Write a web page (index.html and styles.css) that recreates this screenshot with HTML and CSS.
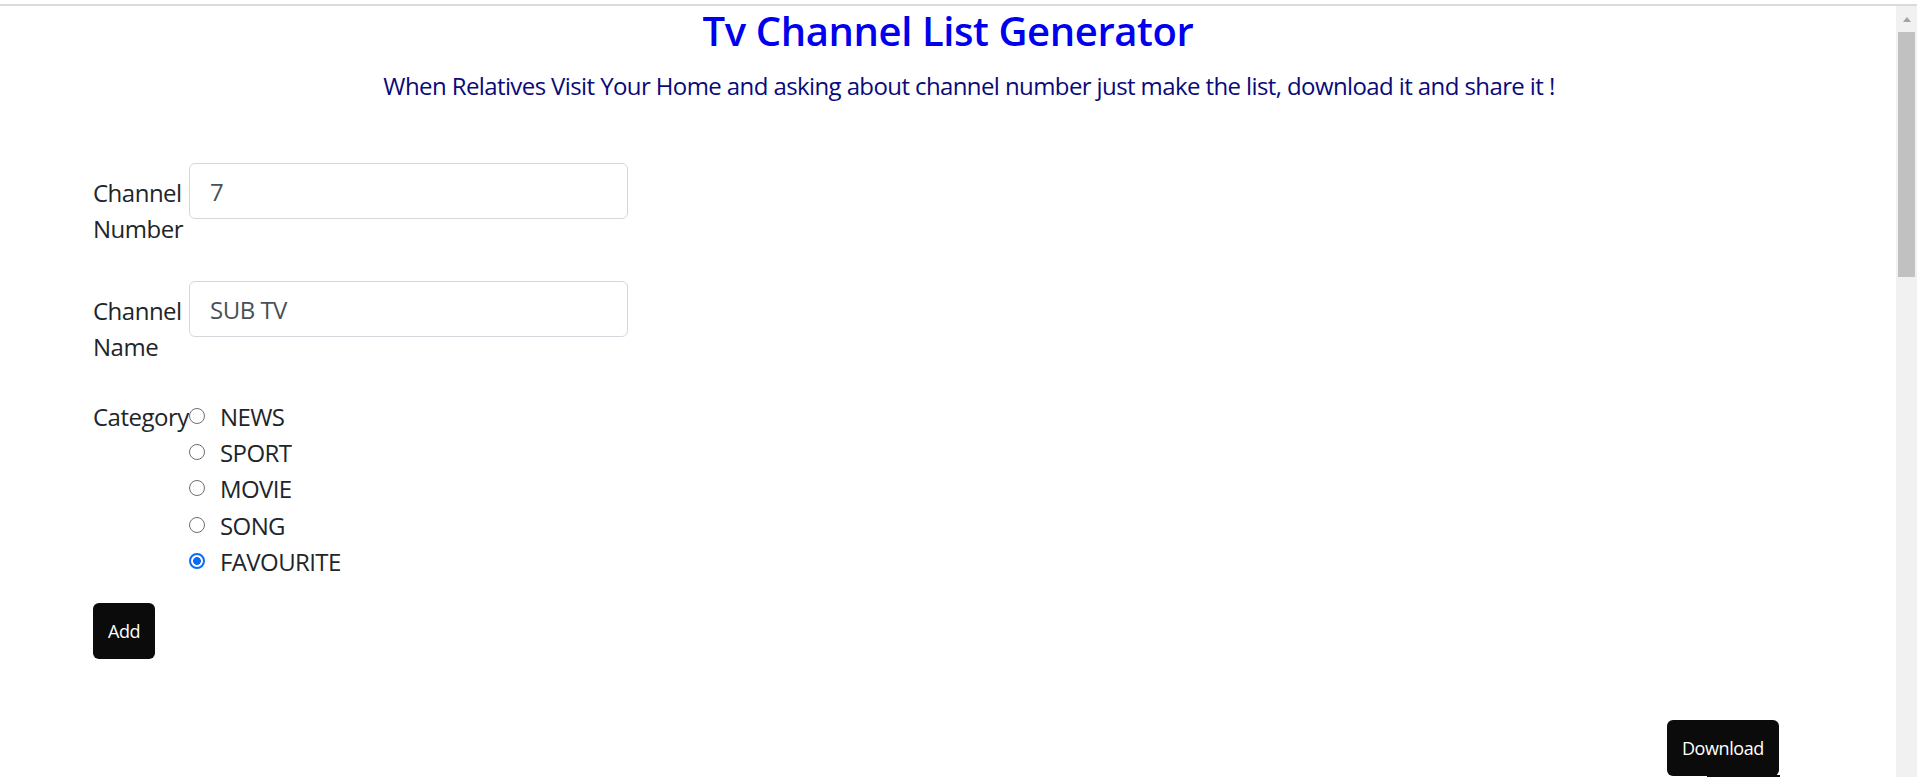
FILE: index.html
```html
<!DOCTYPE html>
<html lang="en">
<head>
<meta charset="utf-8">
<title>Tv Channel List Generator</title>
<link rel="stylesheet" href="styles.css">
</head>
<body>
<div class="topline"></div>
<div class="viewport">
  <main class="page">
    <div class="container">
      <header class="hero">
        <h1 class="title">Tv Channel List Generator</h1>
        <p class="subtitle">When Relatives Visit Your Home and asking about channel number just make the list, download it and share it !</p>
      </header>
      <form class="form">
        <div class="field">
          <label class="label" for="num">Channel Number</label>
          <input id="num" class="control" type="text" value="7">
        </div>
        <div class="field">
          <label class="label" for="name">Channel Name</label>
          <input id="name" class="control" type="text" value="SUB TV">
        </div>
        <div class="field field-radio">
          <span class="label label-plain">Category</span>
          <div class="radios">
            <label class="radio"><input type="radio" name="cat" class="radio-input"><span>NEWS</span></label>
            <label class="radio"><input type="radio" name="cat" class="radio-input"><span>SPORT</span></label>
            <label class="radio"><input type="radio" name="cat" class="radio-input"><span>MOVIE</span></label>
            <label class="radio"><input type="radio" name="cat" class="radio-input"><span>SONG</span></label>
            <label class="radio"><input type="radio" name="cat" class="radio-input" checked><span>FAVOURITE</span></label>
          </div>
        </div>
        <button type="button" class="btn">Add</button>
      </form>
      <div class="actions">
        <button type="button" class="btn">Download</button>
        <div class="peek"></div>
      </div>
    </div>
  </main>
  <div class="scrollbar">
    <div class="arrow"></div>
    <div class="thumb"></div>
  </div>
</div>
</body>
</html>
```
FILE: styles.css
```css
html, body {
  margin: 0;
  padding: 0;
  height: 100%;
  overflow: hidden;
  background: #fff;
}

body {
  font-family: "Open Sans", "Noto Sans", sans-serif;
  font-size: 24px;
  line-height: 36px;
  color: #212529;
  display: flex;
  flex-direction: column;
}

.topline {
  height: 2px;
  border-top: 4px solid #fff;
  background: #dadada;
  flex: none;
}

.viewport {
  flex: 1;
  display: flex;
  min-height: 0;
}

.page {
  flex: 1;
  min-width: 0;
}

.container {
  width: 1710px;
  margin: 0 auto;
}

.hero {
  text-align: center;
  padding-top: 1px;
}

.title {
  margin: 0;
  font-size: 40px;
  line-height: 48px;
  font-weight: 600;
  color: #0000ee;
  letter-spacing: -0.4px;
}

.subtitle {
  margin: 13px 0 0;
  padding-left: 42px;
  font-size: 24px;
  line-height: 36px;
  color: #0a0a7a;
  letter-spacing: -0.6px;
}

.form {
  margin-top: 59px;
}

.field {
  display: flex;
  align-items: flex-start;
  margin-bottom: 24px;
}

.field-radio {
  margin-bottom: 23px;
}

.label {
  width: 96px;
  flex: none;
  padding: 12px 0 10px;
  letter-spacing: -0.5px;
}

.label-plain {
  padding: 0;
}

.control {
  width: 439px;
  height: 56px;
  box-sizing: border-box;
  padding: 9px 20px;
  border: 1.5px solid #d4d8dd;
  border-radius: 6px;
  font-family: inherit;
  font-size: 24px;
  line-height: 36px;
  color: #495057;
  letter-spacing: -0.5px;
  background: #fff;
}

.radios {
  display: flex;
  flex-direction: column;
}

.radio {
  display: flex;
  align-items: flex-start;
  height: 36.2px;
  letter-spacing: -0.6px;
}

.radio-input {
  appearance: none;
  -webkit-appearance: none;
  box-sizing: border-box;
  width: 16px;
  height: 16px;
  margin: 9px 15px 0 0;
  flex: none;
  border: 1.5px solid #6f6f6f;
  border-radius: 50%;
  background: #fff;
}

.radio-input:checked {
  border: 2px solid #0a6cf5;
  background: radial-gradient(circle, #0a6cf5 0 3.6px, #fff 4.2px);
}

.btn {
  height: 56px;
  padding: 0 15px;
  border: none;
  border-radius: 6px;
  background: #0b0b0b;
  color: #fff;
  font-family: "Open Sans", "Noto Sans", sans-serif;
  font-size: 18px;
  letter-spacing: -0.4px;
}

.actions {
  margin-top: 61px;
  padding-right: 24px;
  display: flex;
  flex-direction: column;
  align-items: flex-end;
}

.peek {
  width: 73px;
  height: 4px;
  margin-top: -1px;
  margin-right: -1px;
  background: #0b0b0b;
}

.scrollbar {
  width: 21px;
  flex: none;
  background: #f1f1f1;
  display: flex;
  flex-direction: column;
  align-items: center;
}

.arrow {
  margin-top: 11px;
  width: 0;
  height: 0;
  border-left: 4px solid transparent;
  border-right: 4px solid transparent;
  border-bottom: 5px solid #a3a3a3;
}

.thumb {
  margin-top: 10px;
  width: 17px;
  height: 245px;
  background: #c1c1c1;
}
```
